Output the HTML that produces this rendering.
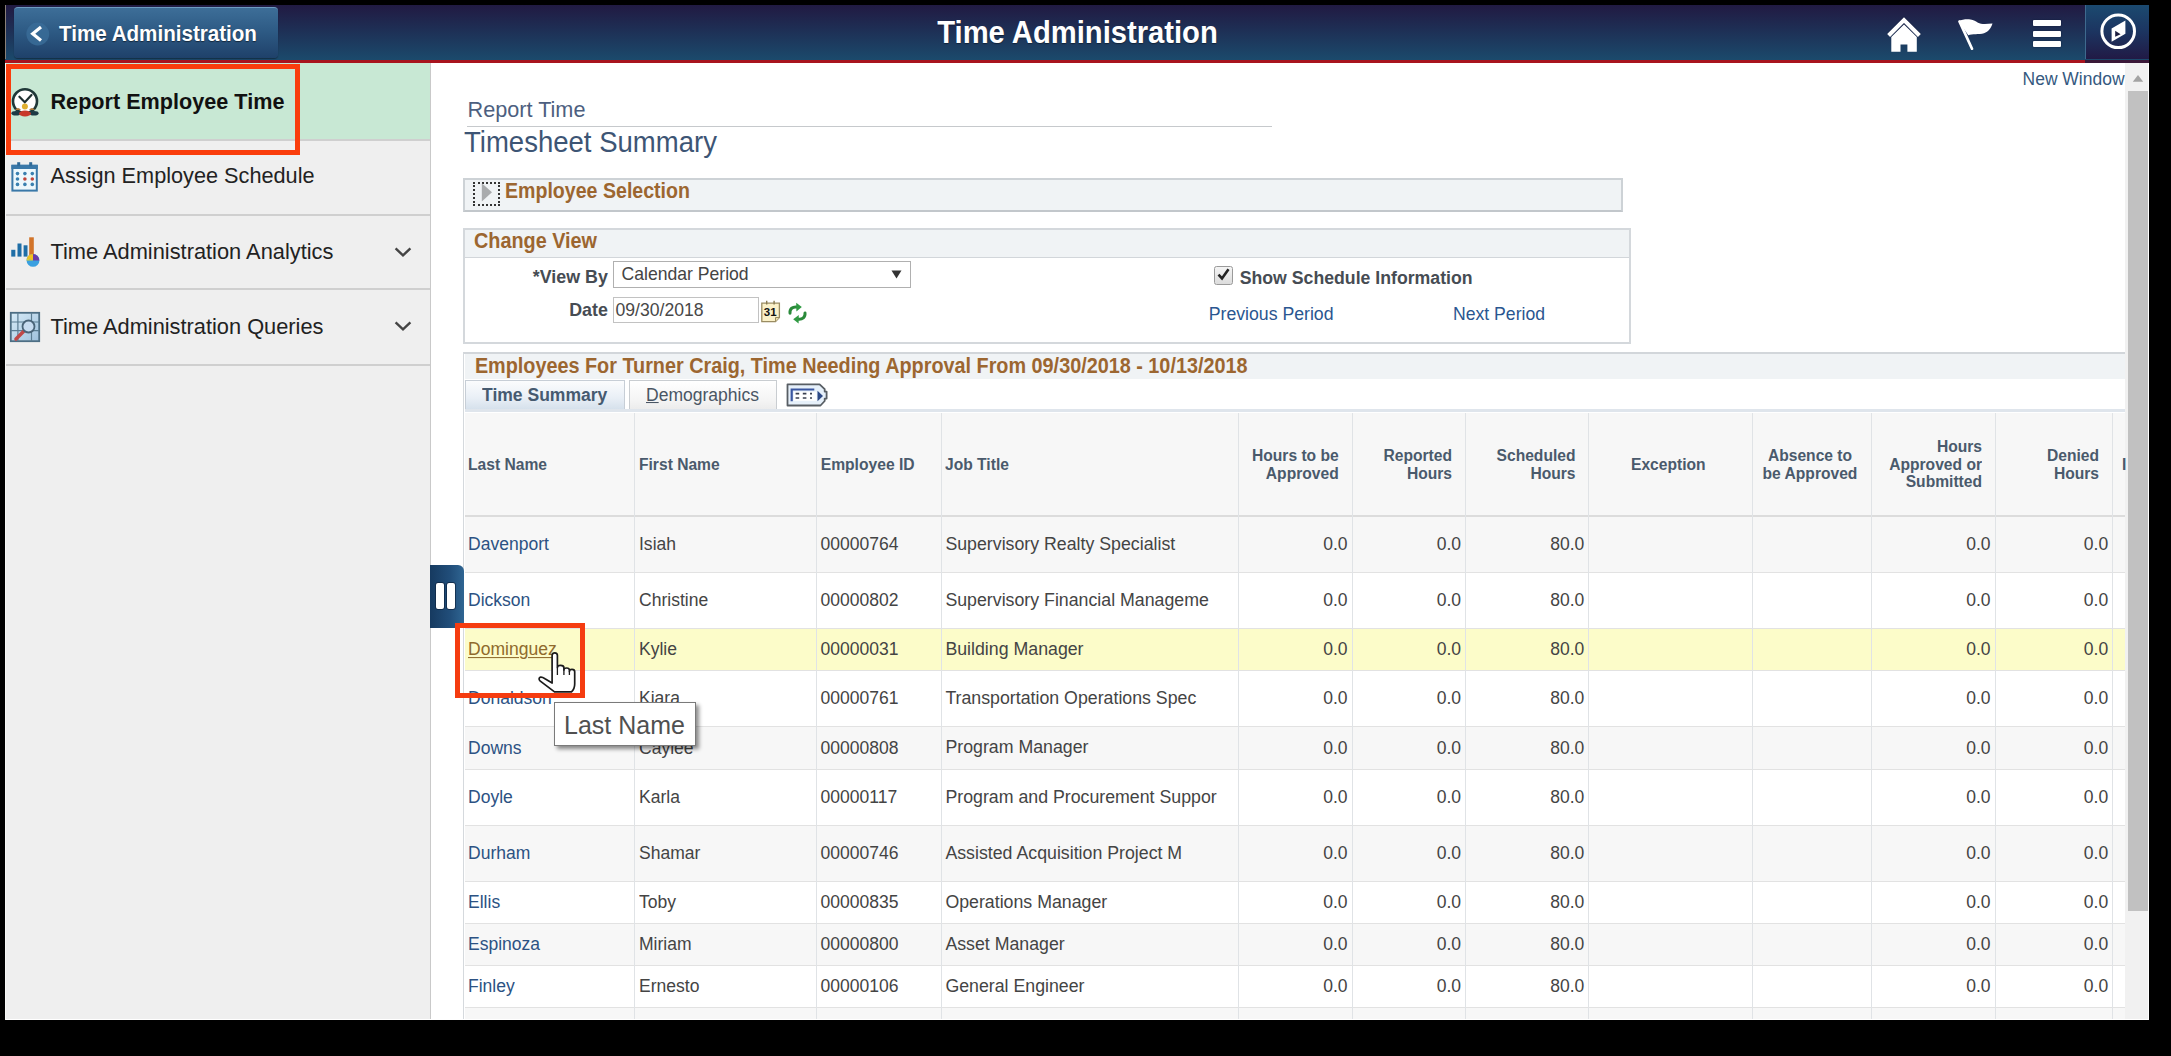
<!DOCTYPE html>
<html><head><meta charset="utf-8"><style>
html,body{margin:0;padding:0;}
body{width:2171px;height:1056px;position:relative;overflow:hidden;background:#000;font-family:"Liberation Sans",sans-serif;}
.t{position:absolute;white-space:nowrap;line-height:1;}
</style></head><body>
<div style="position:absolute;left:5px;top:5px;width:2144px;height:54.5px;background:linear-gradient(180deg,#211a42 0%,#1e2f55 45%,#1b4a6c 100%);"></div>
<div style="position:absolute;left:5px;top:59.5px;width:2080px;height:3.799999999999997px;background:#a8141e;"></div>
<div style="position:absolute;left:2085px;top:5px;width:64px;height:54px;background:linear-gradient(180deg,#1b4a70 0%,#1c3460 50%,#211a45 100%);border-left:1px solid #3e6a8e;box-sizing:border-box;"></div>
<div style="position:absolute;left:2085px;top:59.5px;width:64px;height:3.799999999999997px;background:#3a1838;"></div>
<div style="position:absolute;left:14px;top:7px;width:264px;height:51px;background:linear-gradient(180deg,#3d6e98 0%,#2e5b85 45%,#1f416a 100%);border-radius:4px;border-top:1.5px solid #6e9cc2;box-sizing:border-box;box-shadow:0 1px 1px rgba(0,0,0,.35);"></div>
<svg style="position:absolute;left:26px;top:22px" width="24" height="24" viewBox="0 0 24 24"><circle cx="11.8" cy="12" r="11.4" fill="#3a6c98" opacity="0.85"/><path d="M15 4.9 L6.7 11.7 L15 18.5" fill="none" stroke="#fff" stroke-width="3.2" stroke-linejoin="miter"/></svg>
<div class="t" style="left:59px;top:24.06px;font-size:20.6px;font-weight:bold;color:#fff;text-shadow:0 1px 1px rgba(0,0,0,.5);transform:scaleY(1.045);transform-origin:0 17.44px;">Time Administration</div>
<div class="t" style="left:477.5px;width:1200px;text-align:center;top:18.58px;font-size:29.2px;font-weight:bold;color:#fff;text-shadow:0 1px 1px rgba(0,0,0,.4);transform:scaleY(1.07);transform-origin:0 24.72px;">Time Administration</div>
<svg style="position:absolute;left:1884px;top:14px" width="40" height="40" viewBox="0 0 40 40"><path d="M4.6 21.5 L20 6.1 L35.4 21.5" fill="none" stroke="#0f1838" stroke-width="5.6" opacity=".45"/><path d="M4.6 21.5 L20 6.1 L35.4 21.5" fill="none" stroke="#fff" stroke-width="4.1"/><path d="M7.3 23.1 L20 10.5 L32.8 23.1 L32.8 37.7 L23.4 37.7 L23.4 30.5 L16.5 30.5 L16.5 37.7 L7.3 37.7 Z" fill="#fff"/></svg>
<svg style="position:absolute;left:1954px;top:14px" width="42" height="40" viewBox="0 0 42 40"><path d="M4.3 7 C8 5.5 12 5 15 5.3 C19 5.6 21.5 7 24 8.8 C27 10.5 32 10.3 38.5 9.6 C37 14 34.5 18 30 19.3 C25 20.5 18 20 14.3 21.3 Z" fill="#fff"/><path d="M5.6 7.6 L18 34.7" stroke="#fff" stroke-width="2.7" stroke-linecap="round"/></svg>
<div style="position:absolute;left:2032.6px;top:20px;width:28.700000000000273px;height:6.199999999999999px;background:#fff;border-radius:1px;box-shadow:0 0 1.5px #0a1530;"></div>
<div style="position:absolute;left:2032.6px;top:30.7px;width:28.700000000000273px;height:6.199999999999999px;background:#fff;border-radius:1px;box-shadow:0 0 1.5px #0a1530;"></div>
<div style="position:absolute;left:2032.6px;top:41px;width:28.700000000000273px;height:6.200000000000003px;background:#fff;border-radius:1px;box-shadow:0 0 1.5px #0a1530;"></div>
<svg style="position:absolute;left:2098px;top:11px" width="40" height="40" viewBox="0 0 40 40"><circle cx="20.2" cy="20.3" r="16.3" fill="none" stroke="#fff" stroke-width="3"/><path d="M27.4 9.6 L13.6 17.4 L13.6 30.8 L27.4 22.7 Z" fill="#fff"/><path d="M17.2 19.7 L17.2 25.7 L22.6 23.3 Z" fill="#1d1d3f"/></svg>
<div style="position:absolute;left:5px;top:63px;width:426px;height:957px;background:#efefef;border-right:1px solid #c9c9c9;box-sizing:border-box;"></div>
<div style="position:absolute;left:5px;top:63px;width:425px;height:76px;background:#c8e8d4;"></div>
<div style="position:absolute;left:5px;top:139px;width:425px;height:1.5px;background:#cfcfcf;"></div>
<div style="position:absolute;left:5px;top:214px;width:425px;height:1.5px;background:#cfcfcf;"></div>
<div style="position:absolute;left:5px;top:288px;width:425px;height:1.5px;background:#cfcfcf;"></div>
<div style="position:absolute;left:5px;top:364px;width:425px;height:1.5px;background:#cfcfcf;"></div>
<div class="t" style="left:50.5px;top:91.39px;font-size:21.63px;font-weight:bold;color:#111;transform:scaleY(1.045);transform-origin:0 18.31px;">Report Employee Time</div>
<div class="t" style="left:50.5px;top:165.34px;font-size:21.69px;font-weight:normal;color:#222;transform:scaleY(1.045);transform-origin:0 18.36px;">Assign Employee Schedule</div>
<div class="t" style="left:50.5px;top:241.23px;font-size:21.82px;font-weight:normal;color:#222;transform:scaleY(1.045);transform-origin:0 18.47px;">Time Administration Analytics</div>
<div class="t" style="left:50.5px;top:315.54px;font-size:21.8px;font-weight:normal;color:#222;transform:scaleY(1.045);transform-origin:0 18.46px;">Time Administration Queries</div>
<svg style="position:absolute;left:393px;top:245.6px" width="20" height="12" viewBox="0 0 20 12"><path d="M2.6 2.4 L10 9.4 L17.4 2.4" fill="none" stroke="#444" stroke-width="2.4"/></svg>
<svg style="position:absolute;left:393px;top:319.8px" width="20" height="12" viewBox="0 0 20 12"><path d="M2.6 2.4 L10 9.4 L17.4 2.4" fill="none" stroke="#444" stroke-width="2.4"/></svg>
<svg style="position:absolute;left:9px;top:85px" width="32" height="34" viewBox="0 0 32 34"><circle cx="16" cy="16.2" r="12" fill="#fff" stroke="#1f3838" stroke-width="2.6"/><path d="M10.4 11.7 L15.8 17.2 L22.5 10" fill="none" stroke="#1f3030" stroke-width="2.2" stroke-linecap="round"/><circle cx="15.9" cy="21.5" r="3" fill="#e0b030"/><path d="M6 25 Q9 21 12 25 Z" fill="#b07a3a"/><path d="M20 25 Q23 21 26 25 Z" fill="#b07a3a"/><ellipse cx="7" cy="28.3" rx="4.6" ry="2.3" fill="#1d3a45"/><ellipse cx="25" cy="28.3" rx="4.6" ry="2.3" fill="#1d3a45"/><ellipse cx="16" cy="28.5" rx="6" ry="3" fill="#c8382a"/></svg>
<svg style="position:absolute;left:9px;top:160px" width="32" height="34" viewBox="0 0 32 34"><rect x="3.4" y="5.8" width="24.4" height="24.8" fill="#eef8fc" stroke="#3a78a8" stroke-width="2"/><rect x="2.4" y="4.8" width="26.4" height="4.2" fill="#3a78a8"/><rect x="8.2" y="2.2" width="3" height="4" fill="#2f6a98"/><rect x="20.2" y="2.2" width="3" height="4" fill="#2f6a98"/><circle cx="8.5" cy="13.6" r="1.8" fill="#3a80b0"/><circle cx="15.9" cy="13.6" r="1.8" fill="#3a80b0"/><circle cx="23.3" cy="13.6" r="1.8" fill="#3a80b0"/><circle cx="8.5" cy="19" r="1.8" fill="#3a80b0"/><circle cx="15.9" cy="19" r="1.8" fill="#c0453a"/><circle cx="23.3" cy="19" r="1.8" fill="#c0453a"/><circle cx="8.5" cy="24.4" r="1.8" fill="#3a80b0"/><circle cx="15.9" cy="24.4" r="1.8" fill="#3a80b0"/><circle cx="23.3" cy="24.4" r="1.8" fill="#3a80b0"/></svg>
<svg style="position:absolute;left:9px;top:235px" width="32" height="34" viewBox="0 0 32 34"><rect x="2.25" y="14.8" width="4.1" height="6.8" fill="#1f6ea6"/><rect x="8.5" y="8.5" width="4" height="13.1" fill="#1f6ea6"/><rect x="14.6" y="10.3" width="3.9" height="11.3" fill="#1f6ea6"/><rect x="20.2" y="2.3" width="4.6" height="21" fill="#d2742a"/><circle cx="24" cy="25.4" r="6.4" fill="#3aa0e0"/><path d="M24 25.4 L17.8 23.5 A6.4 6.4 0 0 1 24 19 Z" fill="#f0c020"/><path d="M24 25.4 L24 19 A6.4 6.4 0 0 1 30.3 25.6 Z" fill="#6a3aa8"/><path d="M24 25.4 L17.8 23.5 A6.4 6.4 0 0 0 17.6 25.4 Z" fill="#e0d030"/></svg>
<svg style="position:absolute;left:8px;top:310px" width="34" height="34" viewBox="0 0 34 34"><defs><linearGradient id="qg" x1="0" y1="0" x2="1" y2="1"><stop offset="0" stop-color="#d8ecf8"/><stop offset="1" stop-color="#9ec0dc"/></linearGradient></defs><rect x="2.8" y="2.8" width="28.4" height="28.4" fill="url(#qg)" stroke="#4d6e84" stroke-width="1.8"/><path d="M9.9 2.8 V31.2 M23.5 2.8 V31.2 M2.8 12 H31.2 M2.8 20.6 H31.2" stroke="#5a7c92" stroke-width="1.2"/><path d="M8 29 L16.5 20.5" stroke="#c04848" stroke-width="3.6" stroke-linecap="round"/><circle cx="20.5" cy="16.5" r="6" fill="#c8dcf0" stroke="#4a6478" stroke-width="1.8"/></svg>
<div style="position:absolute;left:431px;top:63px;width:1694px;height:957px;background:#fff;"></div>
<div style="position:absolute;left:2125px;top:63px;width:24px;height:957px;background:#f1f1f1;"></div>
<div style="position:absolute;left:2128px;top:90.5px;width:19.5px;height:820.5px;background:#c1c1c1;"></div>
<svg style="position:absolute;left:2132px;top:74px" width="12" height="9" viewBox="0 0 12 9"><path d="M0.8 7.8 L6 1 L11.2 7.8 Z" fill="#a3a3a3"/></svg>
<div class="t" style="right:46.5px;text-align:right;top:71.20px;font-size:17.48px;font-weight:normal;color:#35597f;transform:scaleY(1.045);transform-origin:0 14.80px;">New Window</div>
<div class="t" style="left:467.5px;top:98.65px;font-size:21.67px;font-weight:normal;color:#4d5f7f;transform:scaleY(1.06);transform-origin:0 18.35px;">Report Time</div>
<div style="position:absolute;left:467px;top:125.5px;width:805px;height:1.5px;background:#c6c9cc;"></div>
<div class="t" style="left:464px;top:129.48px;font-size:27.54px;font-weight:normal;color:#3d5575;transform:scaleY(1.055);transform-origin:0 23.32px;">Timesheet Summary</div>
<div style="position:absolute;left:463px;top:178px;width:1160px;height:33.5px;background:#f0f3f5;border:2px solid #cdd2d6;border-bottom-color:#c2c7cb;box-sizing:border-box;"></div>
<div style="position:absolute;left:473px;top:181.5px;width:27px;height:24.5px;border:2px dotted #333;box-sizing:border-box;"></div>
<svg style="position:absolute;left:481px;top:183px" width="12" height="19" viewBox="0 0 12 19"><path d="M0.8 0.3 L11 9.2 L0.8 18.5 Z" fill="#a9abad"/></svg>
<div class="t" style="left:505px;top:182.22px;font-size:19.58px;font-weight:bold;color:#9c6630;transform:scaleY(1.08);transform-origin:0 16.58px;">Employee Selection</div>
<div style="position:absolute;left:463px;top:227.5px;width:1168px;height:116.5px;background:#fff;border:2px solid #d4d8dc;box-sizing:border-box;"></div>
<div style="position:absolute;left:465px;top:229.5px;width:1164px;height:27.5px;background:#f0f3f5;border-bottom:1.5px solid #d2d6da;"></div>
<div class="t" style="left:474px;top:231.72px;font-size:19.82px;font-weight:bold;color:#9c6630;transform:scaleY(1.08);transform-origin:0 16.78px;">Change View</div>
<div class="t" style="right:1563.2px;text-align:right;top:268.90px;font-size:17.83px;font-weight:bold;color:#464c53;transform:scaleY(1.045);transform-origin:0 15.10px;">*View By</div>
<div style="position:absolute;left:613px;top:261.3px;width:297.5px;height:26.30000000000001px;background:#fff;border:1.5px solid #b0b0b0;box-sizing:border-box;"></div>
<div class="t" style="left:621.5px;top:265.80px;font-size:17.6px;font-weight:normal;color:#444;transform:scaleY(1.045);transform-origin:0 14.90px;">Calendar Period</div>
<svg style="position:absolute;left:890.5px;top:270px" width="11" height="9" viewBox="0 0 11 9"><path d="M0.5 0.5 L10.5 0.5 L5.5 8.5 Z" fill="#333"/></svg>
<div class="t" style="right:1563.2px;text-align:right;top:302.30px;font-size:17.83px;font-weight:bold;color:#464c53;transform:scaleY(1.045);transform-origin:0 15.10px;">Date</div>
<div style="position:absolute;left:613px;top:297.3px;width:145.5px;height:26.19999999999999px;background:#fff;border:1.5px solid #c2c2c2;box-sizing:border-box;"></div>
<div class="t" style="left:615.5px;top:301.90px;font-size:17.6px;font-weight:normal;color:#484848;transform:scaleY(1.045);transform-origin:0 14.90px;">09/30/2018</div>
<svg style="position:absolute;left:760px;top:300px" width="22" height="24" viewBox="0 0 22 24"><path d="M1.8 3.2 L19.4 3.2 L19.4 17.5 L15.5 21.6 L1.8 21.6 Z" fill="#fbf1c8" stroke="#9a8c62" stroke-width="1.3"/><path d="M15.5 21.6 L15.5 17.5 L19.4 17.5" fill="#e8dca8" stroke="#9a8c62" stroke-width="1"/><path d="M6.7 0.8 V4.5 M14.1 0.8 V4.5" stroke="#8a7c52" stroke-width="1.4"/><text x="10.2" y="16" font-family="Liberation Sans" font-weight="bold" font-size="11.5" text-anchor="middle" fill="#111">31</text></svg>
<svg style="position:absolute;left:786px;top:302px" width="23" height="23" viewBox="0 0 23 23"><path d="M4 11.2 C3.6 6.8 6.5 4.5 11 5" fill="none" stroke="#2a8a3a" stroke-width="3" stroke-linecap="round"/><path d="M10.2 0.8 L15.8 5 L10.4 9.4 Z" fill="#2f9a42"/><path d="M19 11 C19.4 15.4 16.5 17.8 12 17.3" fill="none" stroke="#2a8a3a" stroke-width="3" stroke-linecap="round"/><path d="M12.8 13 L7.2 17.3 L12.6 21.5 Z" fill="#2f9a42"/></svg>
<div style="position:absolute;left:1214px;top:266px;width:18.5px;height:18.5px;background:linear-gradient(#f4f4f4,#dcdcdc);border:1.2px solid #9a9a9a;border-radius:2.5px;box-sizing:border-box;"></div>
<svg style="position:absolute;left:1215px;top:266px" width="17" height="17" viewBox="0 0 17 17"><path d="M3.5 8.6 L7 12.4 L13.5 3.2" fill="none" stroke="#222" stroke-width="2.6"/></svg>
<div class="t" style="left:1239.7px;top:270.01px;font-size:17.7px;font-weight:bold;color:#464c53;transform:scaleY(1.045);transform-origin:0 14.99px;">Show Schedule Information</div>
<div class="t" style="left:1208.7px;top:305.80px;font-size:17.71px;font-weight:normal;color:#2a5690;transform:scaleY(1.045);transform-origin:0 15.00px;">Previous Period</div>
<div class="t" style="left:1453px;top:305.89px;font-size:17.61px;font-weight:normal;color:#2a5690;transform:scaleY(1.045);transform-origin:0 14.91px;">Next Period</div>
<div style="position:absolute;left:463px;top:352px;width:1662px;height:668px;background:#fff;border-left:1.5px solid #d5d9dd;border-top:2px solid #d2d6da;box-sizing:border-box;"></div>
<div style="position:absolute;left:464.5px;top:354px;width:1660.5px;height:25px;background:#f0f3f5;"></div>
<div class="t" style="left:474.9px;top:356.72px;font-size:19.82px;font-weight:bold;color:#9c6630;transform:scaleY(1.08);transform-origin:0 16.78px;">Employees For Turner Craig, Time Needing Approval From 09/30/2018 - 10/13/2018</div>
<div style="position:absolute;left:464.5px;top:379.5px;width:160.0px;height:29.5px;background:linear-gradient(180deg,#fbfcfd 0%,#e9eff6 60%,#d6e1ec 100%);border:1.5px solid #c7ced6;border-bottom:none;box-sizing:border-box;"></div>
<div class="t" style="left:482px;top:386.94px;font-size:17.55px;font-weight:bold;color:#465a70;transform:scaleY(1.045);transform-origin:0 14.86px;">Time Summary</div>
<div style="position:absolute;left:629px;top:379.5px;width:147.5px;height:29.5px;background:linear-gradient(180deg,#ffffff 0%,#f4f4f4 70%,#ececec 100%);border:1.5px solid #c9cdd1;border-bottom:none;box-sizing:border-box;"></div>
<div class="t" style="left:646px;top:386.96px;font-size:17.53px;font-weight:normal;color:#4a5664;text-decoration-thickness:1px;transform:scaleY(1.045);transform-origin:0 14.84px;"><u>D</u>emographics</div>
<svg style="position:absolute;left:786px;top:382.5px" width="43" height="24" viewBox="0 0 43 24"><path d="M1.5 1.3 L33.6 1.3 L38.7 6.2 L38.7 8.6 L40.6 8.6 L40.6 15.6 L38.7 15.6 L38.7 18 L34.5 22.5 L1.5 22.5 Z" fill="#e6f0fa" stroke="#585e64" stroke-width="1.8" stroke-linejoin="round"/><path d="M5.7 18.3 L5.7 6.5 L28.3 6.5" fill="none" stroke="#3a56a0" stroke-width="2.2"/><rect x="7.7" y="8.6" width="23" height="9.2" fill="#fff"/><path d="M9.6 10.6 H13.2 M16.8 10.6 H20.4 M24 10.6 H26 M9.6 15 H13.2 M16.8 15 H20.4 M24 15 H26" stroke="#3a4050" stroke-width="1.6"/><path d="M31.5 7.8 L37 13 L31.5 18.3 Z" fill="#2e4a86"/></svg>
<div style="position:absolute;left:464.5px;top:408.7px;width:1660.5px;height:3.8000000000000114px;background:#dfe5ec;"></div>
<div style="position:absolute;left:464.5px;top:412.5px;width:1660.5px;height:102.5px;background:#f7f7f7;"></div>
<div style="position:absolute;left:464.5px;top:515px;width:1660.5px;height:2px;background:#dcdcdc;"></div>
<div class="t" style="left:468px;top:456.57px;font-size:15.62px;font-weight:bold;color:#4a5a6c;transform:scaleY(1.045);transform-origin:0 13.23px;">Last Name</div>
<div class="t" style="left:639px;top:456.57px;font-size:15.62px;font-weight:bold;color:#4a5a6c;transform:scaleY(1.045);transform-origin:0 13.23px;">First Name</div>
<div class="t" style="left:820.7px;top:456.54px;font-size:15.66px;font-weight:bold;color:#4a5a6c;transform:scaleY(1.045);transform-origin:0 13.26px;">Employee ID</div>
<div class="t" style="left:945px;top:456.57px;font-size:15.62px;font-weight:bold;color:#4a5a6c;transform:scaleY(1.045);transform-origin:0 13.23px;">Job Title</div>
<div class="t" style="right:832.3px;text-align:right;top:447.62px;font-size:15.62px;font-weight:bold;color:#4a5a6c;transform:scaleY(1.045);transform-origin:0 13.23px;">Hours to be</div>
<div class="t" style="right:832.3px;text-align:right;top:465.52px;font-size:15.62px;font-weight:bold;color:#4a5a6c;transform:scaleY(1.045);transform-origin:0 13.23px;">Approved</div>
<div class="t" style="right:719px;text-align:right;top:447.62px;font-size:15.62px;font-weight:bold;color:#4a5a6c;transform:scaleY(1.045);transform-origin:0 13.23px;">Reported</div>
<div class="t" style="right:719px;text-align:right;top:465.52px;font-size:15.62px;font-weight:bold;color:#4a5a6c;transform:scaleY(1.045);transform-origin:0 13.23px;">Hours</div>
<div class="t" style="right:595.5px;text-align:right;top:447.62px;font-size:15.62px;font-weight:bold;color:#4a5a6c;transform:scaleY(1.045);transform-origin:0 13.23px;">Scheduled</div>
<div class="t" style="right:595.5px;text-align:right;top:465.52px;font-size:15.62px;font-weight:bold;color:#4a5a6c;transform:scaleY(1.045);transform-origin:0 13.23px;">Hours</div>
<div class="t" style="left:1068.3px;width:1200px;text-align:center;top:456.57px;font-size:15.62px;font-weight:bold;color:#4a5a6c;transform:scaleY(1.045);transform-origin:0 13.23px;">Exception</div>
<div class="t" style="left:1210px;width:1200px;text-align:center;top:447.62px;font-size:15.62px;font-weight:bold;color:#4a5a6c;transform:scaleY(1.045);transform-origin:0 13.23px;">Absence to</div>
<div class="t" style="left:1210px;width:1200px;text-align:center;top:465.52px;font-size:15.62px;font-weight:bold;color:#4a5a6c;transform:scaleY(1.045);transform-origin:0 13.23px;">be Approved</div>
<div class="t" style="right:189px;text-align:right;top:438.67px;font-size:15.62px;font-weight:bold;color:#4a5a6c;transform:scaleY(1.045);transform-origin:0 13.23px;">Hours</div>
<div class="t" style="right:189px;text-align:right;top:456.57px;font-size:15.62px;font-weight:bold;color:#4a5a6c;transform:scaleY(1.045);transform-origin:0 13.23px;">Approved or</div>
<div class="t" style="right:189px;text-align:right;top:474.47px;font-size:15.62px;font-weight:bold;color:#4a5a6c;transform:scaleY(1.045);transform-origin:0 13.23px;">Submitted</div>
<div class="t" style="right:72px;text-align:right;top:447.62px;font-size:15.62px;font-weight:bold;color:#4a5a6c;transform:scaleY(1.045);transform-origin:0 13.23px;">Denied</div>
<div class="t" style="right:72px;text-align:right;top:465.52px;font-size:15.62px;font-weight:bold;color:#4a5a6c;transform:scaleY(1.045);transform-origin:0 13.23px;">Hours</div>
<div class="t" style="left:2122px;top:456.57px;font-size:15.62px;font-weight:bold;color:#4a5a6c;transform:scaleY(1.045);transform-origin:0 13.23px;">I</div>
<div style="position:absolute;left:464.5px;top:517px;width:1660.5px;height:56px;background:#f7f7f7;"></div>
<div style="position:absolute;left:464.5px;top:572px;width:1660.5px;height:1px;background:#e2e2e2;"></div>
<div class="t" style="left:468px;top:536.04px;font-size:17.55px;font-weight:normal;color:#2c5283;transform:scaleY(1.045);transform-origin:0 14.86px;">Davenport</div>
<div class="t" style="left:639px;top:536.04px;font-size:17.55px;font-weight:normal;color:#444444;transform:scaleY(1.045);transform-origin:0 14.86px;">Isiah</div>
<div class="t" style="left:820.5px;top:536.04px;font-size:17.55px;font-weight:normal;color:#444444;transform:scaleY(1.045);transform-origin:0 14.86px;">00000764</div>
<div class="t" style="left:945.4px;top:535.87px;font-size:17.75px;font-weight:normal;color:#444444;transform:scaleY(1.045);transform-origin:0 15.03px;">Supervisory Realty Specialist</div>
<div class="t" style="right:823.5px;text-align:right;top:536.04px;font-size:17.55px;font-weight:normal;color:#444444;transform:scaleY(1.045);transform-origin:0 14.86px;">0.0</div>
<div class="t" style="right:710px;text-align:right;top:536.04px;font-size:17.55px;font-weight:normal;color:#444444;transform:scaleY(1.045);transform-origin:0 14.86px;">0.0</div>
<div class="t" style="right:586.7px;text-align:right;top:536.04px;font-size:17.55px;font-weight:normal;color:#444444;transform:scaleY(1.045);transform-origin:0 14.86px;">80.0</div>
<div class="t" style="right:180.4000000000001px;text-align:right;top:536.04px;font-size:17.55px;font-weight:normal;color:#444444;transform:scaleY(1.045);transform-origin:0 14.86px;">0.0</div>
<div class="t" style="right:62.80000000000018px;text-align:right;top:536.04px;font-size:17.55px;font-weight:normal;color:#444444;transform:scaleY(1.045);transform-origin:0 14.86px;">0.0</div>
<div style="position:absolute;left:464.5px;top:573px;width:1660.5px;height:56px;background:#ffffff;"></div>
<div style="position:absolute;left:464.5px;top:628px;width:1660.5px;height:1px;background:#e2e2e2;"></div>
<div class="t" style="left:468px;top:592.04px;font-size:17.55px;font-weight:normal;color:#2c5283;transform:scaleY(1.045);transform-origin:0 14.86px;">Dickson</div>
<div class="t" style="left:639px;top:592.04px;font-size:17.55px;font-weight:normal;color:#444444;transform:scaleY(1.045);transform-origin:0 14.86px;">Christine</div>
<div class="t" style="left:820.5px;top:592.04px;font-size:17.55px;font-weight:normal;color:#444444;transform:scaleY(1.045);transform-origin:0 14.86px;">00000802</div>
<div class="t" style="left:945.4px;top:591.87px;font-size:17.75px;font-weight:normal;color:#444444;transform:scaleY(1.045);transform-origin:0 15.03px;">Supervisory Financial Manageme</div>
<div class="t" style="right:823.5px;text-align:right;top:592.04px;font-size:17.55px;font-weight:normal;color:#444444;transform:scaleY(1.045);transform-origin:0 14.86px;">0.0</div>
<div class="t" style="right:710px;text-align:right;top:592.04px;font-size:17.55px;font-weight:normal;color:#444444;transform:scaleY(1.045);transform-origin:0 14.86px;">0.0</div>
<div class="t" style="right:586.7px;text-align:right;top:592.04px;font-size:17.55px;font-weight:normal;color:#444444;transform:scaleY(1.045);transform-origin:0 14.86px;">80.0</div>
<div class="t" style="right:180.4000000000001px;text-align:right;top:592.04px;font-size:17.55px;font-weight:normal;color:#444444;transform:scaleY(1.045);transform-origin:0 14.86px;">0.0</div>
<div class="t" style="right:62.80000000000018px;text-align:right;top:592.04px;font-size:17.55px;font-weight:normal;color:#444444;transform:scaleY(1.045);transform-origin:0 14.86px;">0.0</div>
<div style="position:absolute;left:464.5px;top:629px;width:1660.5px;height:42px;background:#fcfcc9;"></div>
<div style="position:absolute;left:464.5px;top:670px;width:1660.5px;height:1px;background:#e2e2e2;"></div>
<div class="t" style="left:468px;top:641.04px;font-size:17.55px;font-weight:normal;color:#8f6a2c;text-decoration:underline;text-underline-offset:2px;transform:scaleY(1.045);transform-origin:0 14.86px;">Dominguez</div>
<div class="t" style="left:639px;top:641.04px;font-size:17.55px;font-weight:normal;color:#444444;transform:scaleY(1.045);transform-origin:0 14.86px;">Kylie</div>
<div class="t" style="left:820.5px;top:641.04px;font-size:17.55px;font-weight:normal;color:#444444;transform:scaleY(1.045);transform-origin:0 14.86px;">00000031</div>
<div class="t" style="left:945.4px;top:640.87px;font-size:17.75px;font-weight:normal;color:#444444;transform:scaleY(1.045);transform-origin:0 15.03px;">Building Manager</div>
<div class="t" style="right:823.5px;text-align:right;top:641.04px;font-size:17.55px;font-weight:normal;color:#444444;transform:scaleY(1.045);transform-origin:0 14.86px;">0.0</div>
<div class="t" style="right:710px;text-align:right;top:641.04px;font-size:17.55px;font-weight:normal;color:#444444;transform:scaleY(1.045);transform-origin:0 14.86px;">0.0</div>
<div class="t" style="right:586.7px;text-align:right;top:641.04px;font-size:17.55px;font-weight:normal;color:#444444;transform:scaleY(1.045);transform-origin:0 14.86px;">80.0</div>
<div class="t" style="right:180.4000000000001px;text-align:right;top:641.04px;font-size:17.55px;font-weight:normal;color:#444444;transform:scaleY(1.045);transform-origin:0 14.86px;">0.0</div>
<div class="t" style="right:62.80000000000018px;text-align:right;top:641.04px;font-size:17.55px;font-weight:normal;color:#444444;transform:scaleY(1.045);transform-origin:0 14.86px;">0.0</div>
<div style="position:absolute;left:464.5px;top:671px;width:1660.5px;height:56px;background:#ffffff;"></div>
<div style="position:absolute;left:464.5px;top:726px;width:1660.5px;height:1px;background:#e2e2e2;"></div>
<div class="t" style="left:468px;top:690.04px;font-size:17.55px;font-weight:normal;color:#2c5283;transform:scaleY(1.045);transform-origin:0 14.86px;">Donaldson</div>
<div class="t" style="left:639px;top:690.04px;font-size:17.55px;font-weight:normal;color:#444444;transform:scaleY(1.045);transform-origin:0 14.86px;">Kiara</div>
<div class="t" style="left:820.5px;top:690.04px;font-size:17.55px;font-weight:normal;color:#444444;transform:scaleY(1.045);transform-origin:0 14.86px;">00000761</div>
<div class="t" style="left:945.4px;top:689.87px;font-size:17.75px;font-weight:normal;color:#444444;transform:scaleY(1.045);transform-origin:0 15.03px;">Transportation Operations Spec</div>
<div class="t" style="right:823.5px;text-align:right;top:690.04px;font-size:17.55px;font-weight:normal;color:#444444;transform:scaleY(1.045);transform-origin:0 14.86px;">0.0</div>
<div class="t" style="right:710px;text-align:right;top:690.04px;font-size:17.55px;font-weight:normal;color:#444444;transform:scaleY(1.045);transform-origin:0 14.86px;">0.0</div>
<div class="t" style="right:586.7px;text-align:right;top:690.04px;font-size:17.55px;font-weight:normal;color:#444444;transform:scaleY(1.045);transform-origin:0 14.86px;">80.0</div>
<div class="t" style="right:180.4000000000001px;text-align:right;top:690.04px;font-size:17.55px;font-weight:normal;color:#444444;transform:scaleY(1.045);transform-origin:0 14.86px;">0.0</div>
<div class="t" style="right:62.80000000000018px;text-align:right;top:690.04px;font-size:17.55px;font-weight:normal;color:#444444;transform:scaleY(1.045);transform-origin:0 14.86px;">0.0</div>
<div style="position:absolute;left:464.5px;top:727px;width:1660.5px;height:43px;background:#f7f7f7;"></div>
<div style="position:absolute;left:464.5px;top:769px;width:1660.5px;height:1px;background:#e2e2e2;"></div>
<div class="t" style="left:468px;top:739.54px;font-size:17.55px;font-weight:normal;color:#2c5283;transform:scaleY(1.045);transform-origin:0 14.86px;">Downs</div>
<div class="t" style="left:639px;top:739.54px;font-size:17.55px;font-weight:normal;color:#444444;transform:scaleY(1.045);transform-origin:0 14.86px;">Caylee</div>
<div class="t" style="left:820.5px;top:739.54px;font-size:17.55px;font-weight:normal;color:#444444;transform:scaleY(1.045);transform-origin:0 14.86px;">00000808</div>
<div class="t" style="left:945.4px;top:739.37px;font-size:17.75px;font-weight:normal;color:#444444;transform:scaleY(1.045);transform-origin:0 15.03px;">Program Manager</div>
<div class="t" style="right:823.5px;text-align:right;top:739.54px;font-size:17.55px;font-weight:normal;color:#444444;transform:scaleY(1.045);transform-origin:0 14.86px;">0.0</div>
<div class="t" style="right:710px;text-align:right;top:739.54px;font-size:17.55px;font-weight:normal;color:#444444;transform:scaleY(1.045);transform-origin:0 14.86px;">0.0</div>
<div class="t" style="right:586.7px;text-align:right;top:739.54px;font-size:17.55px;font-weight:normal;color:#444444;transform:scaleY(1.045);transform-origin:0 14.86px;">80.0</div>
<div class="t" style="right:180.4000000000001px;text-align:right;top:739.54px;font-size:17.55px;font-weight:normal;color:#444444;transform:scaleY(1.045);transform-origin:0 14.86px;">0.0</div>
<div class="t" style="right:62.80000000000018px;text-align:right;top:739.54px;font-size:17.55px;font-weight:normal;color:#444444;transform:scaleY(1.045);transform-origin:0 14.86px;">0.0</div>
<div style="position:absolute;left:464.5px;top:770px;width:1660.5px;height:56px;background:#ffffff;"></div>
<div style="position:absolute;left:464.5px;top:825px;width:1660.5px;height:1px;background:#e2e2e2;"></div>
<div class="t" style="left:468px;top:789.04px;font-size:17.55px;font-weight:normal;color:#2c5283;transform:scaleY(1.045);transform-origin:0 14.86px;">Doyle</div>
<div class="t" style="left:639px;top:789.04px;font-size:17.55px;font-weight:normal;color:#444444;transform:scaleY(1.045);transform-origin:0 14.86px;">Karla</div>
<div class="t" style="left:820.5px;top:789.04px;font-size:17.55px;font-weight:normal;color:#444444;transform:scaleY(1.045);transform-origin:0 14.86px;">00000117</div>
<div class="t" style="left:945.4px;top:788.87px;font-size:17.75px;font-weight:normal;color:#444444;transform:scaleY(1.045);transform-origin:0 15.03px;">Program and Procurement Suppor</div>
<div class="t" style="right:823.5px;text-align:right;top:789.04px;font-size:17.55px;font-weight:normal;color:#444444;transform:scaleY(1.045);transform-origin:0 14.86px;">0.0</div>
<div class="t" style="right:710px;text-align:right;top:789.04px;font-size:17.55px;font-weight:normal;color:#444444;transform:scaleY(1.045);transform-origin:0 14.86px;">0.0</div>
<div class="t" style="right:586.7px;text-align:right;top:789.04px;font-size:17.55px;font-weight:normal;color:#444444;transform:scaleY(1.045);transform-origin:0 14.86px;">80.0</div>
<div class="t" style="right:180.4000000000001px;text-align:right;top:789.04px;font-size:17.55px;font-weight:normal;color:#444444;transform:scaleY(1.045);transform-origin:0 14.86px;">0.0</div>
<div class="t" style="right:62.80000000000018px;text-align:right;top:789.04px;font-size:17.55px;font-weight:normal;color:#444444;transform:scaleY(1.045);transform-origin:0 14.86px;">0.0</div>
<div style="position:absolute;left:464.5px;top:826px;width:1660.5px;height:56px;background:#f7f7f7;"></div>
<div style="position:absolute;left:464.5px;top:881px;width:1660.5px;height:1px;background:#e2e2e2;"></div>
<div class="t" style="left:468px;top:845.04px;font-size:17.55px;font-weight:normal;color:#2c5283;transform:scaleY(1.045);transform-origin:0 14.86px;">Durham</div>
<div class="t" style="left:639px;top:845.04px;font-size:17.55px;font-weight:normal;color:#444444;transform:scaleY(1.045);transform-origin:0 14.86px;">Shamar</div>
<div class="t" style="left:820.5px;top:845.04px;font-size:17.55px;font-weight:normal;color:#444444;transform:scaleY(1.045);transform-origin:0 14.86px;">00000746</div>
<div class="t" style="left:945.4px;top:844.87px;font-size:17.75px;font-weight:normal;color:#444444;transform:scaleY(1.045);transform-origin:0 15.03px;">Assisted Acquisition Project M</div>
<div class="t" style="right:823.5px;text-align:right;top:845.04px;font-size:17.55px;font-weight:normal;color:#444444;transform:scaleY(1.045);transform-origin:0 14.86px;">0.0</div>
<div class="t" style="right:710px;text-align:right;top:845.04px;font-size:17.55px;font-weight:normal;color:#444444;transform:scaleY(1.045);transform-origin:0 14.86px;">0.0</div>
<div class="t" style="right:586.7px;text-align:right;top:845.04px;font-size:17.55px;font-weight:normal;color:#444444;transform:scaleY(1.045);transform-origin:0 14.86px;">80.0</div>
<div class="t" style="right:180.4000000000001px;text-align:right;top:845.04px;font-size:17.55px;font-weight:normal;color:#444444;transform:scaleY(1.045);transform-origin:0 14.86px;">0.0</div>
<div class="t" style="right:62.80000000000018px;text-align:right;top:845.04px;font-size:17.55px;font-weight:normal;color:#444444;transform:scaleY(1.045);transform-origin:0 14.86px;">0.0</div>
<div style="position:absolute;left:464.5px;top:882px;width:1660.5px;height:42px;background:#ffffff;"></div>
<div style="position:absolute;left:464.5px;top:923px;width:1660.5px;height:1px;background:#e2e2e2;"></div>
<div class="t" style="left:468px;top:894.04px;font-size:17.55px;font-weight:normal;color:#2c5283;transform:scaleY(1.045);transform-origin:0 14.86px;">Ellis</div>
<div class="t" style="left:639px;top:894.04px;font-size:17.55px;font-weight:normal;color:#444444;transform:scaleY(1.045);transform-origin:0 14.86px;">Toby</div>
<div class="t" style="left:820.5px;top:894.04px;font-size:17.55px;font-weight:normal;color:#444444;transform:scaleY(1.045);transform-origin:0 14.86px;">00000835</div>
<div class="t" style="left:945.4px;top:893.87px;font-size:17.75px;font-weight:normal;color:#444444;transform:scaleY(1.045);transform-origin:0 15.03px;">Operations Manager</div>
<div class="t" style="right:823.5px;text-align:right;top:894.04px;font-size:17.55px;font-weight:normal;color:#444444;transform:scaleY(1.045);transform-origin:0 14.86px;">0.0</div>
<div class="t" style="right:710px;text-align:right;top:894.04px;font-size:17.55px;font-weight:normal;color:#444444;transform:scaleY(1.045);transform-origin:0 14.86px;">0.0</div>
<div class="t" style="right:586.7px;text-align:right;top:894.04px;font-size:17.55px;font-weight:normal;color:#444444;transform:scaleY(1.045);transform-origin:0 14.86px;">80.0</div>
<div class="t" style="right:180.4000000000001px;text-align:right;top:894.04px;font-size:17.55px;font-weight:normal;color:#444444;transform:scaleY(1.045);transform-origin:0 14.86px;">0.0</div>
<div class="t" style="right:62.80000000000018px;text-align:right;top:894.04px;font-size:17.55px;font-weight:normal;color:#444444;transform:scaleY(1.045);transform-origin:0 14.86px;">0.0</div>
<div style="position:absolute;left:464.5px;top:924px;width:1660.5px;height:42px;background:#f7f7f7;"></div>
<div style="position:absolute;left:464.5px;top:965px;width:1660.5px;height:1px;background:#e2e2e2;"></div>
<div class="t" style="left:468px;top:936.04px;font-size:17.55px;font-weight:normal;color:#2c5283;transform:scaleY(1.045);transform-origin:0 14.86px;">Espinoza</div>
<div class="t" style="left:639px;top:936.04px;font-size:17.55px;font-weight:normal;color:#444444;transform:scaleY(1.045);transform-origin:0 14.86px;">Miriam</div>
<div class="t" style="left:820.5px;top:936.04px;font-size:17.55px;font-weight:normal;color:#444444;transform:scaleY(1.045);transform-origin:0 14.86px;">00000800</div>
<div class="t" style="left:945.4px;top:935.87px;font-size:17.75px;font-weight:normal;color:#444444;transform:scaleY(1.045);transform-origin:0 15.03px;">Asset Manager</div>
<div class="t" style="right:823.5px;text-align:right;top:936.04px;font-size:17.55px;font-weight:normal;color:#444444;transform:scaleY(1.045);transform-origin:0 14.86px;">0.0</div>
<div class="t" style="right:710px;text-align:right;top:936.04px;font-size:17.55px;font-weight:normal;color:#444444;transform:scaleY(1.045);transform-origin:0 14.86px;">0.0</div>
<div class="t" style="right:586.7px;text-align:right;top:936.04px;font-size:17.55px;font-weight:normal;color:#444444;transform:scaleY(1.045);transform-origin:0 14.86px;">80.0</div>
<div class="t" style="right:180.4000000000001px;text-align:right;top:936.04px;font-size:17.55px;font-weight:normal;color:#444444;transform:scaleY(1.045);transform-origin:0 14.86px;">0.0</div>
<div class="t" style="right:62.80000000000018px;text-align:right;top:936.04px;font-size:17.55px;font-weight:normal;color:#444444;transform:scaleY(1.045);transform-origin:0 14.86px;">0.0</div>
<div style="position:absolute;left:464.5px;top:966px;width:1660.5px;height:42px;background:#ffffff;"></div>
<div style="position:absolute;left:464.5px;top:1007px;width:1660.5px;height:1px;background:#e2e2e2;"></div>
<div class="t" style="left:468px;top:978.04px;font-size:17.55px;font-weight:normal;color:#2c5283;transform:scaleY(1.045);transform-origin:0 14.86px;">Finley</div>
<div class="t" style="left:639px;top:978.04px;font-size:17.55px;font-weight:normal;color:#444444;transform:scaleY(1.045);transform-origin:0 14.86px;">Ernesto</div>
<div class="t" style="left:820.5px;top:978.04px;font-size:17.55px;font-weight:normal;color:#444444;transform:scaleY(1.045);transform-origin:0 14.86px;">00000106</div>
<div class="t" style="left:945.4px;top:977.87px;font-size:17.75px;font-weight:normal;color:#444444;transform:scaleY(1.045);transform-origin:0 15.03px;">General Engineer</div>
<div class="t" style="right:823.5px;text-align:right;top:978.04px;font-size:17.55px;font-weight:normal;color:#444444;transform:scaleY(1.045);transform-origin:0 14.86px;">0.0</div>
<div class="t" style="right:710px;text-align:right;top:978.04px;font-size:17.55px;font-weight:normal;color:#444444;transform:scaleY(1.045);transform-origin:0 14.86px;">0.0</div>
<div class="t" style="right:586.7px;text-align:right;top:978.04px;font-size:17.55px;font-weight:normal;color:#444444;transform:scaleY(1.045);transform-origin:0 14.86px;">80.0</div>
<div class="t" style="right:180.4000000000001px;text-align:right;top:978.04px;font-size:17.55px;font-weight:normal;color:#444444;transform:scaleY(1.045);transform-origin:0 14.86px;">0.0</div>
<div class="t" style="right:62.80000000000018px;text-align:right;top:978.04px;font-size:17.55px;font-weight:normal;color:#444444;transform:scaleY(1.045);transform-origin:0 14.86px;">0.0</div>
<div style="position:absolute;left:464.5px;top:1008px;width:1660.5px;height:32px;background:#f7f7f7;"></div>
<div style="position:absolute;left:464.5px;top:1039px;width:1660.5px;height:1px;background:#e2e2e2;"></div>
<div style="position:absolute;left:633.5px;top:412.5px;width:1.0px;height:607.5px;background:#e0e3e6;"></div>
<div style="position:absolute;left:815.5px;top:412.5px;width:1.0px;height:607.5px;background:#e0e3e6;"></div>
<div style="position:absolute;left:940.5px;top:412.5px;width:1.0px;height:607.5px;background:#e0e3e6;"></div>
<div style="position:absolute;left:1238.0px;top:412.5px;width:1.0px;height:607.5px;background:#e0e3e6;"></div>
<div style="position:absolute;left:1351.5px;top:412.5px;width:1.0px;height:607.5px;background:#e0e3e6;"></div>
<div style="position:absolute;left:1464.5px;top:412.5px;width:1.0px;height:607.5px;background:#e0e3e6;"></div>
<div style="position:absolute;left:1588.3px;top:412.5px;width:1.0px;height:607.5px;background:#e0e3e6;"></div>
<div style="position:absolute;left:1751.5px;top:412.5px;width:1.0px;height:607.5px;background:#e0e3e6;"></div>
<div style="position:absolute;left:1871.0px;top:412.5px;width:1.0px;height:607.5px;background:#e0e3e6;"></div>
<div style="position:absolute;left:1994.5px;top:412.5px;width:1.0px;height:607.5px;background:#e0e3e6;"></div>
<div style="position:absolute;left:2112.2px;top:412.5px;width:1.0px;height:607.5px;background:#e0e3e6;"></div>
<div style="position:absolute;left:430px;top:565.3px;width:33.60000000000002px;height:62.5px;background:linear-gradient(90deg,#163a60 0%,#214e7a 60%,#2f6592 100%);border-radius:0 6px 0 0;"></div>
<div style="position:absolute;left:436px;top:582.7px;width:7.5px;height:26.5px;background:#fff;border-radius:2px;box-shadow:0 0 0 0.7px #0d2440;"></div>
<div style="position:absolute;left:447px;top:582.7px;width:7.5px;height:26.5px;background:#fff;border-radius:2px;box-shadow:0 0 0 0.7px #0d2440;"></div>
<div style="position:absolute;left:6px;top:63.8px;width:294px;height:91.2px;border:5.8px solid #fa3d0c;box-sizing:border-box;"></div>
<div style="position:absolute;left:455.3px;top:623px;width:130.2px;height:75px;border:5.8px solid #f53c10;box-sizing:border-box;"></div>
<div style="position:absolute;left:553.5px;top:702px;width:142.0px;height:43.5px;background:#fff;border:1px solid #7a7a7a;box-sizing:border-box;box-shadow:3px 3px 4px rgba(0,0,0,.45);"></div>
<div class="t" style="left:564px;top:712.53px;font-size:25.0px;font-weight:normal;color:#505050;transform:scaleY(1.045);transform-origin:0 21.17px;">Last Name</div>
<svg style="position:absolute;left:536px;top:651px" width="42" height="46" viewBox="0 0 42 46"><path d="M16.1 4.5 C16.1 2.6 17.3 1.8 18.75 1.8 C20.2 1.8 21.4 2.6 21.4 4.5 L21.4 16.5 C21.4 15 22.6 14.4 24.6 14.4 C26.7 14.4 27.9 15.2 27.9 16.8 L27.9 19 C27.9 17.6 29 17 30.6 17 C32.3 17 33.4 17.8 33.4 19.2 L33.4 20.5 C33.4 19 34.5 18.4 36 18.4 C37.6 18.4 38.7 19.3 38.7 20.8 L38.7 33 C38.7 36.5 37.5 39 35.5 40.9 L18.5 40.9 L4 29.8 C2.6 28.7 2.8 26.5 4.6 26.2 C6 26 7.5 26.8 9 27.8 L16.1 32 Z" fill="#fff" stroke="#1b1b1b" stroke-width="1.7" stroke-linejoin="round"/><path d="M21.4 16.5 V24 M27.9 19 V24 M33.4 20.5 V24" stroke="#1b1b1b" stroke-width="1.3"/></svg>
<div style="position:absolute;left:0px;top:0px;width:2171px;height:5px;background:#000;"></div>
<div style="position:absolute;left:0px;top:0px;width:5px;height:1056px;background:#000;"></div>
<div style="position:absolute;left:2149px;top:0px;width:22px;height:1056px;background:#000;"></div>
<div style="position:absolute;left:0px;top:1020px;width:2171px;height:36px;background:#000;"></div>
<div style="position:absolute;left:2148px;top:63px;width:1px;height:957px;background:#fff;"></div>
<div style="position:absolute;left:5px;top:1019px;width:2144px;height:1px;background:#fff;"></div>
<div style="position:absolute;left:5px;top:5px;width:1px;height:54px;background:#8a8078;"></div>
<div style="position:absolute;left:5px;top:63px;width:1px;height:957px;background:#f8f8f6;"></div>
</body></html>
